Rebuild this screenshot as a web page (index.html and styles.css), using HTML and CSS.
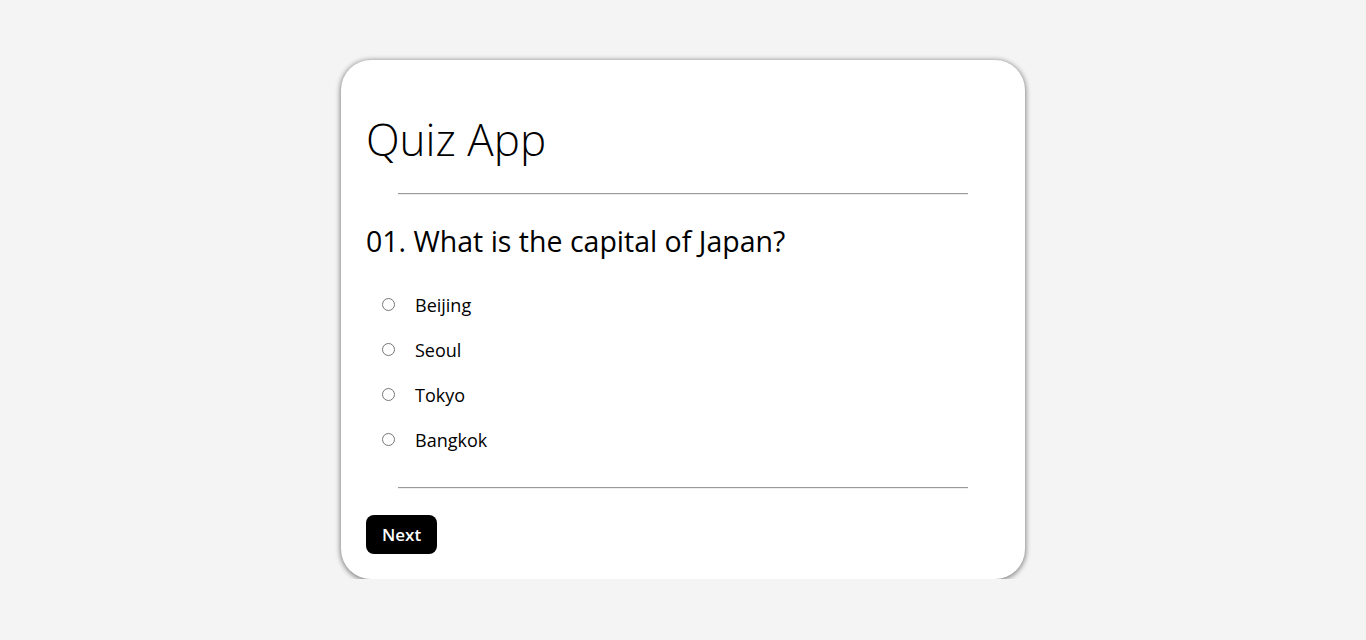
FILE: index.html
```html
<!DOCTYPE html>
<html>
<head>
<meta charset="utf-8">
<link rel="stylesheet" href="styles.css">
<title>Quiz App</title>
</head>
<body>
<div class="app">
  <h1 class="title">Quiz App</h1>
  <hr class="rule">
  <div class="quiz">
    <h2 class="question">01. What is the capital of Japan?</h2>
    <ul class="options">
      <li class="option"><input type="radio" name="ans" id="a1"><label for="a1">Beijing</label></li>
      <li class="option"><input type="radio" name="ans" id="a2"><label for="a2">Seoul</label></li>
      <li class="option"><input type="radio" name="ans" id="a3"><label for="a3">Tokyo</label></li>
      <li class="option"><input type="radio" name="ans" id="a4"><label for="a4">Bangkok</label></li>
    </ul>
  </div>
  <hr class="rule">
  <div class="actions"><button class="next">Next</button></div>
</div>
</body>
</html>
```
FILE: styles.css
```css
html, body {
  margin: 0;
  padding: 0;
}
body {
  background: #f4f4f4;
  font-family: "Open Sans", sans-serif;
  color: #000;
  display: flex;
  justify-content: center;
  padding-top: 60px;
}
.app {
  width: 634px;
  background: #fff;
  border-radius: 30px;
  box-shadow: 0 1px 5px 1px rgba(0,0,0,0.45);
  padding: 25px 25px 25px 25px;
}
.title {
  font-weight: 300;
  font-size: 44px;
  margin: 24px 0 24px 0;
  line-height: 60px;
}
.rule {
  width: 90%;
  margin: 0 auto;
  border: 0;
  border-top: 1px solid #9a9a9a;
  border-bottom: 1px solid #eee;
  height: 0;
}
.question {
  font-weight: 400;
  font-size: 28.5px;
  line-height: 40px;
  margin: 26px 0 21px 0;
}
.options {
  list-style: none;
  margin: 0;
  padding: 0 0 25px 16px;
}
.option {
  display: flex;
  align-items: center;
  height: 45px;
  font-size: 18px;
}
.option input {
  margin: 0 20px 0 0;
  width: 13px;
  height: 13px;
}
.actions {
  margin-top: 26px;
  display: flex;
}
.next {
  background: #000;
  color: #fff;
  border: 0;
  border-radius: 8px;
  font-family: "Open Sans", sans-serif;
  font-weight: 600;
  font-size: 17px;
  padding: 0 16px 0 16px;
  height: 39px;
}
```
